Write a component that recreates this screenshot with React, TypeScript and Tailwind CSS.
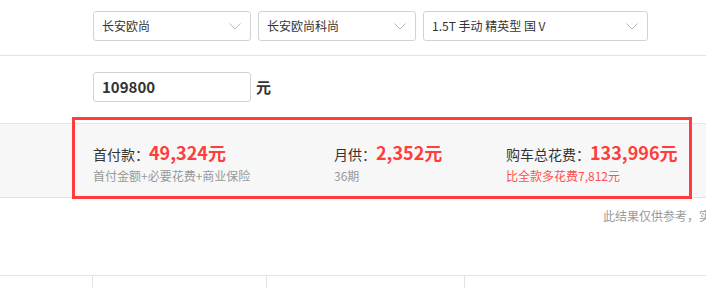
import React from 'react';

const font = { fontFamily: '"Noto Sans CJK SC", "Noto Sans", sans-serif' };

function Chevron() {
  return (
    <svg width="12" height="7" viewBox="0 0 12 7" className="shrink-0">
      <path d="M0.5 0.5 L6 6 L11.5 0.5" fill="none" stroke="#bcbcbc" strokeWidth="1" />
    </svg>
  );
}

function Select({ label, width }: { label: string; width: string }) {
  return (
    <div
      className={`${width} h-[30px] border border-[#d2d2d2] rounded-[3px] bg-white flex items-center justify-between pl-[8px] pr-[9px]`}
    >
      <span className="text-[12px] text-[#333] leading-none">{label}</span>
      <Chevron />
    </div>
  );
}

export default function App() {
  return (
    <div className="w-[706px] h-[288px] bg-white overflow-hidden" style={font}>
      {/* selects */}
      <div className="h-[56px] border-b border-[#e3e3e3] pt-[11px] pl-[93px] flex gap-[7px]">
        <Select label="长安欧尚" width="w-[158px]" />
        <Select label="长安欧尚科尚" width="w-[158px]" />
        <Select label="1.5T 手动 精英型 国 V" width="w-[225px]" />
      </div>

      {/* price input */}
      <div className="pt-[16px] pl-[93px] flex items-center gap-[5px]">
        <div className="w-[158px] h-[30px] border border-[#d2d2d2] rounded-[3px] bg-white flex items-center pl-[8px]">
          <span className="text-[15px] font-bold text-[#333]">109800</span>
        </div>
        <span className="text-[15px] font-bold text-[#333]">元</span>
      </div>

      {/* result band */}
      <div className="mt-[21px] h-[75px] bg-[#f7f7f7] border-y border-[#e3e3e3]">
        <div className="-mt-[7px] ml-[72px] w-[620px] h-[82px] border-[3px] border-[#ff3b3b] flex pt-[19px]">
          <div className="w-[259px] pl-[18px]">
            <div className="flex items-baseline h-[24px]">
              <span className="text-[14px] text-[#333]">首付款：</span>
              <span className="text-[18px] font-bold text-[#ff3d3d]">49,324元</span>
            </div>
            <div className="mt-[5px] text-[12px] text-[#999] leading-[16px]">首付金额+必要花费+商业保险</div>
          </div>
          <div className="w-[172px]">
            <div className="flex items-baseline h-[24px]">
              <span className="text-[14px] text-[#333]">月供：</span>
              <span className="text-[18px] font-bold text-[#ff3d3d]">2,352元</span>
            </div>
            <div className="mt-[5px] text-[12px] text-[#999] leading-[16px]">36期</div>
          </div>
          <div className="flex-1">
            <div className="flex items-baseline h-[24px]">
              <span className="text-[14px] text-[#333]">购车总花费：</span>
              <span className="text-[18px] font-bold text-[#ff3d3d]">133,996元</span>
            </div>
            <div className="mt-[5px] text-[12px] text-[#ff5050] leading-[16px]">比全款多花费7,812元</div>
          </div>
        </div>
      </div>

      {/* note */}
      <div className="h-[77px] pt-[10px] pl-[603px] whitespace-nowrap text-[12px] text-[#999] leading-[16px]">
        此结果仅供参考，实际应缴费以当地为准
      </div>

      {/* table head */}
      <div className="flex h-[14px] border-t border-[#e3e3e3]">
        <div className="w-[92px]" />
        <div className="w-[174px] border-l border-[#e3e3e3]" />
        <div className="w-[198px] border-l border-[#e3e3e3]" />
        <div className="flex-1 border-l border-[#e3e3e3]" />
      </div>
    </div>
  );
}
